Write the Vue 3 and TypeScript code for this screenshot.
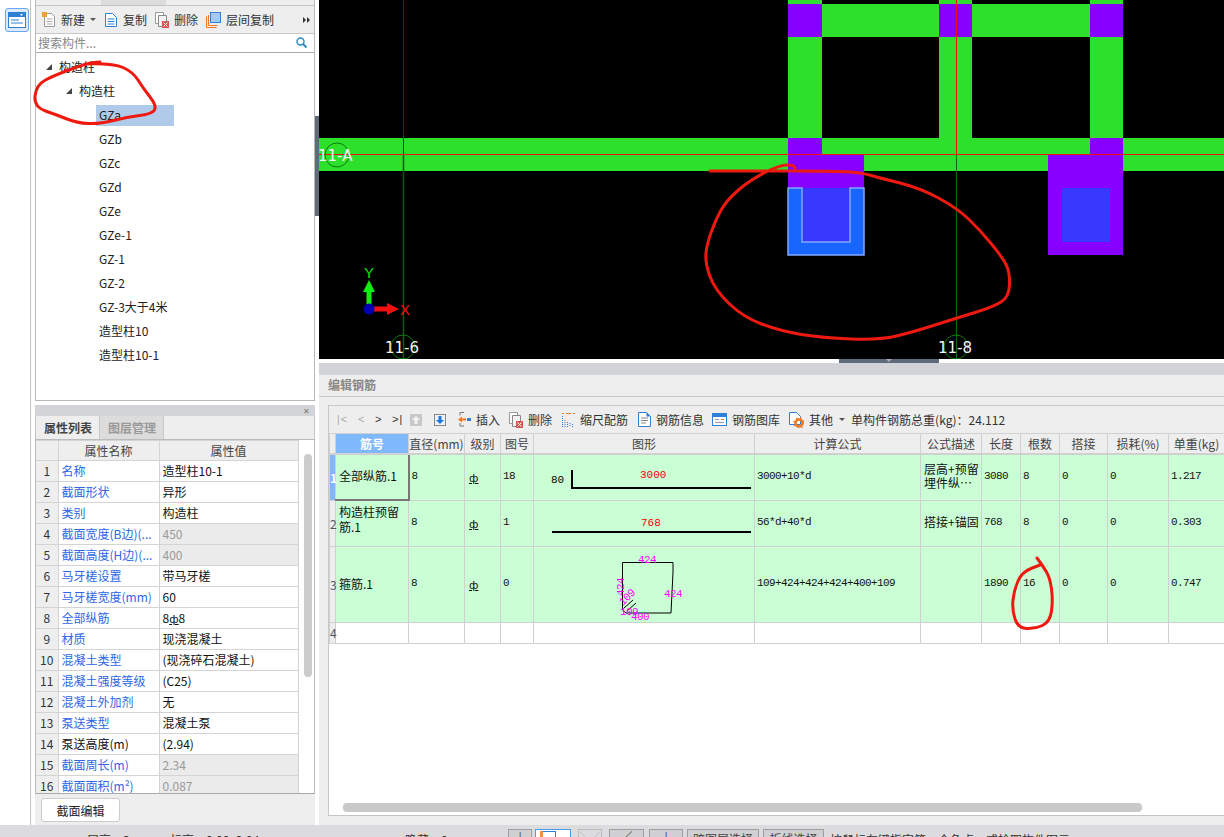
<template>
  <div class="app">
    <div class="main">
      <div class="strip">
        <div class="strip-btn">
          <svg width="18" height="16" viewBox="0 0 18 16">
            <rect x="0.5" y="0.5" width="17" height="15" fill="#fff" stroke="#2f7fd6" />
            <rect x="1" y="1" width="16" height="4" fill="#2f7fd6" />
            <path d="M3 8h8M3 11h12" stroke="#2f7fd6" />
            <path d="M12 2h3l-1.5 2z" fill="#fff" />
          </svg>
        </div>
      </div>

      <div class="left">
        <div class="tree-panel">
          <div class="tree-tabs"><span class="tree-tab"></span></div>
          <div class="tree-tools">
            <span class="tool">
              <svg width="14" height="16" viewBox="0 0 14 16"><path d="M2.5 1.5h7l3 3v10h-10z" fill="#fff" stroke="#999" /><path d="M4.500 7h6M4.500 9.500h6M4.500 12h6" stroke="#aaa" /><rect x="0" y="0" width="5" height="5" fill="#f0a030" /></svg>
              新建<i class="caret"></i>
            </span>
            <span class="tool">
              <svg width="14" height="16" viewBox="0 0 14 16"><path d="M1.500 1.500h7l4 4v9h-11z" fill="#fff" stroke="#2f7fd6" /><path d="M3.500 7h7M3.500 9.500h7M3.500 12h7" stroke="#2f7fd6" /></svg>
              复制
            </span>
            <span class="tool">
              <svg width="14" height="16" viewBox="0 0 14 16"><path d="M0.500 0.500h8v11h-8z" fill="#fff" stroke="#999" /><path d="M3.500 3.500h8v11h-8z" fill="#f4f4f4" stroke="#888" /><rect x="7" y="9" width="7" height="7" fill="#e05050" /><path d="M8.500 10.500l4 4m0-4l-4 4" stroke="#fff" /></svg>
              删除
            </span>
            <span class="tool">
              <svg width="15" height="16" viewBox="0 0 15 16"><path d="M0.500 4.500v11h10" fill="none" stroke="#f07820" /><path d="M2.500 3v10.500h9" fill="none" stroke="#f07820" /><rect x="4.500" y="0.500" width="10" height="10" fill="#a8c8f0" stroke="#2f7fd6" /></svg>
              层间复制
            </span>
            <span class="more"><i></i><i></i></span>
          </div>
          <div class="tree-search">
            <span>搜索构件...</span>
            <svg width="11" height="11" viewBox="0 0 11 11"><circle cx="4.500" cy="4.500" r="3.500" fill="none" stroke="#2a8fc8" stroke-width="1.500" /><path d="M7 7l3.500 3.500" stroke="#2a8fc8" stroke-width="2" /></svg>
          </div>
          <div class="tree-body">
            <div class="tree-row lv0"><i class="tri"></i>构造柱</div>
            <div class="tree-row lv1"><i class="tri"></i>构造柱</div>
            <div
              v-for="(name, i) in treeItems"
              :key="name"
              class="tree-row lv2"
            >
              <span class="leaf" :class="{ selected: i === 0 }">{{ name }}</span>
            </div>
          </div>
        </div>

        <div class="props-panel">
          <div class="props-title"><span class="close">✕</span></div>
          <div class="props-tabs">
            <span class="ptab active">属性列表</span>
            <span class="ptab">图层管理</span>
          </div>
          <div class="props-wrap">
            <table class="props">
              <colgroup><col style="width: 22px" /><col style="width: 101px" /><col style="width: 139px" /></colgroup>
              <thead>
                <tr><th></th><th>属性名称</th><th>属性值</th></tr>
              </thead>
              <tbody>
                <tr v-for="(p, i) in props" :key="i">
                  <td class="idx">{{ i + 1 }}</td>
                  <td class="pname" :class="{ plain: p.plain }">{{ p.name }}</td>
                  <td class="pval" :class="{ off: p.off }">
                    <template v-if="p.bar">8<span class="grade">ф</span>8</template>
                    <template v-else>{{ p.value }}</template>
                  </td>
                </tr>
              </tbody>
            </table>
            <div class="props-scroll"><div class="props-thumb"></div></div>
          </div>
          <div class="props-foot"><button class="edit-btn">截面编辑</button></div>
        </div>
      </div>

      <div class="sash"><div class="sash-handle"></div></div>

      <div class="right">
        <svg class="canvas" width="905" height="359" viewBox="319 0 905 359">
          <rect x="319" y="0" width="905" height="359" fill="#000" />
          <!-- 梁 -->
          <g fill="#2ce02c">
            <rect x="788" y="0" width="34" height="138" />
            <rect x="939" y="0" width="33" height="138" />
            <rect x="1090" y="0" width="33" height="138" />
            <rect x="788" y="4" width="335" height="33" />
            <rect x="319" y="138" width="905" height="33" />
          </g>
          <g fill="#8800ff">
            <rect x="788" y="4" width="34" height="33" />
            <rect x="939" y="4" width="33" height="33" />
            <rect x="1090" y="4" width="33" height="33" />
            <rect x="788" y="138" width="34" height="17" />
            <rect x="788" y="155" width="76" height="33" />
            <rect x="1090" y="138" width="33" height="17" />
            <rect x="1048" y="155" width="75" height="100" />
          </g>
          <rect x="1062" y="188" width="48" height="54" fill="#3838ff" />
          <!-- 选中的构造柱 -->
          <rect x="802" y="188" width="48" height="54" fill="#3838ff" />
          <path d="M788 188h14v54h48v-54h14v67h-76z" fill="#1966ff" stroke="#80a8ff" stroke-width="1.500" />
          <!-- 轴线 -->
          <path d="M403.500 0v155" stroke="#8a0000" />
          <path d="M403.500 155v205" stroke="#0c5a0c" stroke-width="1.500" />
          <path d="M956.500 0v155" stroke="#f01010" />
          <path d="M956.500 155v205" stroke="#0c6a0c" />
          <path d="M319 154.500h905" stroke="#f01010" />
          <g fill="none" stroke="#0c7a0c">
            <circle cx="337" cy="155" r="12" />
            <circle cx="403" cy="347" r="12" />
            <circle cx="956" cy="347" r="12" />
          </g>
          <g class="axis-label" fill="#f4f4f4">
            <text x="318" y="161">11-A</text>
            <text x="385" y="353">11-6</text>
            <text x="938" y="353">11-8</text>
          </g>
          <!-- 坐标系 -->
          <rect x="366.500" y="290" width="5" height="19" fill="#10f010" />
          <path d="M369 280l6 12h-12z" fill="#10f010" />
          <rect x="369" y="306.500" width="20" height="5" fill="#f01010" />
          <path d="M387 303l12 6-12 6z" fill="#f01010" />
          <circle cx="369" cy="309" r="5.500" fill="#0000b0" />
          <text class="xy" x="364" y="278" fill="#10e010">Y</text>
          <text class="xy" x="400" y="315" fill="#f01010">X</text>
        </svg>

        <div class="split"><div class="split-handle"><i></i></div></div>
        <div class="gap-bar"></div>

        <div class="rebar-panel">
          <div class="rebar-title">编辑钢筋</div>
          <div class="rebar-box">
            <div class="rebar-tools">
              <span class="nav"><span class="nav-off">|&lt;</span><span class="nav-off">&lt;</span><span>&gt;</span><span>&gt;|</span></span>
              <svg class="updown" width="12" height="12" viewBox="0 0 12 12"><rect width="12" height="12" fill="#c8c8c8" /><path d="M6 2l4 4H7.500v4h-3V6H2z" fill="#f4f4f4" /></svg>
              <svg class="updown second" width="12" height="12" viewBox="0 0 12 12"><rect width="12" height="12" fill="#888" /><rect x="1" y="1" width="10" height="10" fill="#e8f0fa" /><path d="M6 10L2 6h2.500V2h3v4H10z" fill="#1e78d8" /></svg>
              <span class="rtool ins">
                <svg width="13" height="15" viewBox="0 0 13 15"><path d="M6 .500H2v3M2 11v3h4" fill="none" stroke="#777" /><path d="M0 7.500l4-3v2h4v2H4v2z" fill="#f07820" /><rect x="9" y="6" width="4" height="3" fill="#2f7fd6" /></svg>
                插入
              </span>
              <span class="rtool">
                <svg width="14" height="16" viewBox="0 0 14 16"><path d="M0.500 0.500h8v11h-8z" fill="#fff" stroke="#999" /><path d="M3.500 3.500h8v11h-8z" fill="#f4f4f4" stroke="#888" /><rect x="7" y="9" width="7" height="7" fill="#e05050" /><path d="M8.500 10.500l4 4m0-4l-4 4" stroke="#fff" /></svg>
                删除
              </span>
              <span class="rtool t3">
                <svg width="13" height="15" viewBox="0 0 13 15"><path d="M0 1.500h2M11 1.500h2M4 1.500h5" stroke="#f07820" /><path d="M0.500 4v11M3 8v7M5.500 10v5M8 11v4M10.500 12v3" stroke="#2f7fd6" stroke-dasharray="1 1" /></svg>
                缩尺配筋
              </span>
              <span class="rtool t3">
                <svg width="13" height="15" viewBox="0 0 13 15"><path d="M.500 .500h8l4 4v10H.500z" fill="#fff" stroke="#2f7fd6" /><path d="M8.500 .500v4h4z" fill="#2f7fd6" /><path d="M3 6h7M3 8.500h7M3 11h5" stroke="#888" /></svg>
                钢筋信息
              </span>
              <span class="rtool t5">
                <svg width="15" height="13" viewBox="0 0 15 13"><rect x=".5" y=".5" width="14" height="12" fill="#fff" stroke="#2f7fd6" /><rect x="1" y="1" width="13" height="3" fill="#2f7fd6" /><path d="M3 6.500h4M3 9.500h9" stroke="#999" /><path d="M9 6.500h3" stroke="#f07820" /></svg>
                钢筋图库
              </span>
              <span class="rtool">
                <svg width="15" height="16" viewBox="0 0 15 16"><path d="M.500 .500h7l4 4v8H.500z" fill="#fff" stroke="#2f7fd6" /><circle cx="10" cy="11" r="3.500" fill="none" stroke="#f07820" stroke-width="2.500" /><circle cx="10" cy="11" r="5" fill="none" stroke="#f07820" stroke-dasharray="1.500 2.500" stroke-width="1.500" /></svg>
                其他<i class="caret"></i>
              </span>
              <span class="total">单构件钢筋总重(kg)：24.112</span>
            </div>

            <table class="rebar">
              <colgroup>
                <col v-for="w in colWidths" :key="w.k" :style="{ width: w.v + 'px' }" />
              </colgroup>
              <thead>
                <tr class="head">
                  <th class="rh"></th>
                  <th v-for="(h, i) in heads" :key="h" :class="{ cur: i === 0 }">{{ h }}</th>
                </tr>
              </thead>
              <tbody>
                <tr class="r1">
                  <td class="rh cur-rh">1</td>
                  <td class="jn cur-cell">全部纵筋.1</td>
                  <td class="m">8</td>
                  <td class="gr"><span class="grade">ф</span></td>
                  <td class="m">18</td>
                  <td class="shape">
                    <svg width="220" height="45" viewBox="534 455 220 45">
                      <path d="M572 470v18h179" fill="none" stroke="#000" stroke-width="2" />
                      <text class="dim" x="551" y="483" fill="#000">80</text>
                      <text class="dim" x="640" y="478" fill="#f00000">3000</text>
                    </svg>
                  </td>
                  <td class="m">3000+10*d</td>
                  <td class="desc two">层高+预留<br />埋件纵⋯</td>
                  <td class="m">3080</td>
                  <td class="m">8</td>
                  <td class="m">0</td>
                  <td class="m">0</td>
                  <td class="m">1.217</td>
                </tr>
                <tr class="r2">
                  <td class="rh">2</td>
                  <td class="jn two">构造柱预留<br />筋.1</td>
                  <td class="m">8</td>
                  <td class="gr"><span class="grade">ф</span></td>
                  <td class="m">1</td>
                  <td class="shape">
                    <svg width="220" height="45" viewBox="534 501 220 45">
                      <path d="M552 532h199" fill="none" stroke="#000" stroke-width="2" />
                      <text class="dim" x="641" y="526" fill="#f00000">768</text>
                    </svg>
                  </td>
                  <td class="m">56*d+40*d</td>
                  <td class="desc">搭接+锚固</td>
                  <td class="m">768</td>
                  <td class="m">8</td>
                  <td class="m">0</td>
                  <td class="m">0</td>
                  <td class="m">0.303</td>
                </tr>
                <tr class="r3">
                  <td class="rh">3</td>
                  <td class="jn">箍筋.1</td>
                  <td class="m">8</td>
                  <td class="gr"><span class="grade">ф</span></td>
                  <td class="m">0</td>
                  <td class="shape">
                    <svg width="220" height="75" viewBox="534 547 220 75">
                      <path d="M622.500 610V562.500H673V572L671 613H626L622.500 610" fill="none" stroke="#000" />
                      <path d="M624 608l9-8M627 611l9-8" stroke="#000" />
                      <g class="mag" fill="#ff00ff">
                        <text x="638" y="563">424</text>
                        <text x="664" y="597">424</text>
                        <text transform="translate(624 596) rotate(-90)">424</text>
                        <text x="631" y="620">400</text>
                        <text x="620" y="615">109</text>
                        <text transform="translate(623 606) rotate(-45)">109</text>
                      </g>
                    </svg>
                  </td>
                  <td class="m">109+424+424+424+400+109</td>
                  <td></td>
                  <td class="m">1890</td>
                  <td class="m">16</td>
                  <td class="m">0</td>
                  <td class="m">0</td>
                  <td class="m">0.747</td>
                </tr>
                <tr class="r4">
                  <td class="rh">4</td>
                  <td v-for="n in 12" :key="n"></td>
                </tr>
              </tbody>
            </table>
            <div class="h-scroll"><div class="h-thumb"></div></div>
          </div>
        </div>
      </div>
    </div>

    <div class="status">
      <span class="st st1">层高：3</span>
      <span class="st st2">标高：0.00~2.94</span>
      <span class="st st3">隐藏：0</span>
      <span class="sbtn b1">|</span>
      <span class="sbtn b2"><i class="sq"></i></span>
      <span class="sbtn b3">╲╱</span>
      <span class="sbtn b4">∕</span>
      <span class="sbtn b5">|</span>
      <span class="sbtn b6">跨图层选择</span>
      <span class="sbtn b7">折线选择</span>
      <span class="hint">按鼠标左键指定第一个角点，或拾取构件图元</span>
    </div>

    <!-- 手绘批注 -->
    <svg class="marks" width="1224" height="837" viewBox="0 0 1224 837">
      <path v-for="(m, i) in marks" :key="i" :d="m" fill="none" stroke="#ee1a10" stroke-width="3" stroke-linecap="round" stroke-linejoin="round" />
    </svg>
  </div>
</template>

<script setup lang="ts">
interface Prop {
  name: string;
  value?: string;
  off?: boolean;
  plain?: boolean;
  bar?: boolean;
}

const treeItems = [
  'GZa', 'GZb', 'GZc', 'GZd', 'GZe', 'GZe-1', 'GZ-1', 'GZ-2', 'GZ-3大于4米', '造型柱10', '造型柱10-1',
];

const props: Prop[] = [
  { name: '名称', value: '造型柱10-1' },
  { name: '截面形状', value: '异形' },
  { name: '类别', value: '构造柱' },
  { name: '截面宽度(B边)(...', value: '450', off: true },
  { name: '截面高度(H边)(...', value: '400', off: true },
  { name: '马牙槎设置', value: '带马牙槎' },
  { name: '马牙槎宽度(mm)', value: '60' },
  { name: '全部纵筋', bar: true },
  { name: '材质', value: '现浇混凝土' },
  { name: '混凝土类型', value: '(现浇碎石混凝土)' },
  { name: '混凝土强度等级', value: '(C25)' },
  { name: '混凝土外加剂', value: '无' },
  { name: '泵送类型', value: '混凝土泵' },
  { name: '泵送高度(m)', value: '(2.94)', plain: true },
  { name: '截面周长(m)', value: '2.34', off: true },
  { name: '截面面积(m²)', value: '0.087', off: true },
];

const heads = ['筋号', '直径(mm)', '级别', '图号', '图形', '计算公式', '公式描述', '长度', '根数', '搭接', '损耗(%)', '单重(kg)'];

const colWidths = [6, 73, 56, 36, 33, 221, 166, 61, 39, 39, 48, 61, 56].map((v, k) => ({ k, v }));

// 折点连成平滑曲线
const smooth = (pts: number[][]) => {
  let d = `M${pts[0][0]} ${pts[0][1]}`;
  for (let i = 1; i < pts.length - 1; i++) {
    const mx = (pts[i][0] + pts[i + 1][0]) / 2;
    const my = (pts[i][1] + pts[i + 1][1]) / 2;
    d += ` Q${pts[i][0]} ${pts[i][1]} ${mx} ${my}`;
  }
  const last = pts[pts.length - 1];
  return `${d} L${last[0]} ${last[1]}`;
};

const marks = [
  smooth([[85, 64], [113, 63], [133, 72], [143, 88], [157, 106], [152, 114], [127, 117], [100, 124], [77, 123], [57, 115], [34, 107], [36, 85], [55, 75], [88, 63], [100, 62]]),
  smooth([[710, 171], [760, 171], [837, 171], [863, 173], [880, 178], [920, 188], [957, 208], [980, 230], [1003, 258], [1010, 273], [1009, 297], [993, 307], [957, 318], [913, 332], [880, 340], [823, 338], [780, 331], [743, 317], [715, 290], [705, 263], [707, 243], [717, 217], [727, 200], [750, 180], [780, 165], [793, 165], [795, 168]]),
  smooth([[1037, 558], [1043, 566], [1050, 578], [1053, 600], [1050, 622], [1035, 629], [1018, 628], [1012, 610], [1014, 590], [1022, 572], [1040, 565]]),
];
</script>

<style>
html, body { margin: 0; background: #fff; overflow: hidden; }
</style>

<style scoped>
.app {
  position: relative;
  width: 1224px;
  height: 837px;
  overflow: hidden;
  display: flex;
  flex-direction: column;
  font-family: "Noto Sans CJK SC", "Liberation Sans", sans-serif;
  font-size: 12px;
  color: #333;
  background: #fff;
}
.main { height: 825px; display: flex; }

.strip {
  width: 25px;
  flex-shrink: 0;
  border-right: 1px solid #c4c4c4;
  padding: 8px 0 0 5px;
  margin-right: 4px;
}
.strip-btn {
  width: 22px;
  height: 22px;
  border: 1px solid #6aa8f0;
  border-radius: 3px;
  background: #dcebfb;
  display: flex;
  align-items: center;
  justify-content: center;
}

.left { width: 280px; flex-shrink: 0; display: flex; flex-direction: column; }
.tree-panel {
  height: 401px;
  box-sizing: border-box;
  border: 1px solid #b8b8b8;
  border-top: none;
  display: flex;
  flex-direction: column;
}
.tree-tabs { height: 5px; background: #eee; border-bottom: 1px solid #c4c4c4; padding-left: 65px; }
.tree-tab { display: block; width: 65px; height: 5px; background: #dcdcdc; }
.tree-tools {
  height: 27px;
  background: #eee;
  border-bottom: 1px solid #c8c8c8;
  display: flex;
  align-items: center;
  padding-left: 6px;
  gap: 8px;
}
.tool { display: flex; align-items: center; gap: 5px; }
.caret {
  display: inline-block;
  width: 0;
  height: 0;
  border: 3px solid transparent;
  border-top: 3px solid #555;
  margin: 3px 0 0 0;
}
.more { margin-left: auto; margin-right: 4px; display: flex; gap: 1px; }
.more i { width: 0; height: 0; border: 3px solid transparent; border-left: 3px solid #333; border-right: none; }
.tree-search {
  border-bottom: 1px solid #aaa;
  display: flex;
  align-items: center;
  justify-content: space-between;
  padding: 0 7px 2px 2px;
  box-sizing: border-box;
  height: 19px;
  color: #888;
}
.tree-body { flex: 1; padding-top: 2px; color: #222; }
.tree-row { height: 24px; line-height: 24px; display: flex; align-items: center; }
.lv0 { padding-left: 10px; }
.lv1 { padding-left: 30px; }
.lv2 { padding-left: 60px; }
.tri {
  width: 0;
  height: 0;
  border-style: solid;
  border-width: 0 0 6px 6px;
  border-color: transparent transparent #444 transparent;
  margin-right: 7px;
}
.leaf { display: block; min-width: 75px; height: 21px; line-height: 19px; padding-left: 3px; }
.leaf.selected { background: #b0cbea; }

.props-panel {
  margin-top: 4px;
  flex: 1;
  display: flex;
  flex-direction: column;
  background: #eee;
}
.props-title { height: 11px; background: #d3d4d8; display: flex; justify-content: flex-end; align-items: center; padding-right: 5px; }
.close { font-size: 8px; color: #777; }
.props-tabs { height: 23px; display: flex; background: #eee; border-left: 1px solid #c4c4c4; border-right: 1px solid #c4c4c4; box-sizing: border-box; }
.ptab { width: 64px; text-align: center; line-height: 23px; background: #dcdcdc; color: #999; font-weight: bold; box-shadow: inset -1px 0 #c8c8c8; }
.ptab.active { background: #eee; color: #444; }
.props-wrap {
  height: 355px;
  background: #fff;
  border: 1px solid #bbb;
  border-bottom-color: #aaa;
  box-sizing: border-box;
  display: flex;
  overflow: hidden;
}
.props {
  width: 262px;
  flex-shrink: 0;
  table-layout: fixed;
  border-collapse: collapse;
  align-self: flex-start;
}
.props th, .props td {
  height: 21px;
  padding: 0 0 1px;
  border: 1px solid #d4d4d4;
  border-left: none;
  box-sizing: border-box;
  white-space: nowrap;
  overflow: hidden;
}
.props th { background: #eee; font-weight: normal; color: #444; font-size: 12px; height: 20px; }
.idx { background: #eee; text-align: center; color: #333; }
.pname { color: #2e66e6; padding-left: 3px !important; }
.pname.plain { color: #111; }
.pval { color: #111; padding-left: 3px !important; }
.pval.off { background: #ebebeb; color: #999; }
.grade { text-decoration: underline; font-family: "DejaVu Sans", sans-serif; font-size: 11px; }
.props-scroll { flex: 1; padding: 14px 0 0 5px; }
.props-thumb { width: 8px; height: 223px; background: #cbcbcb; border-radius: 4px; }
.props-foot { flex: 1; padding: 4px 0 0 6px; }
.edit-btn {
  width: 79px;
  height: 24px;
  padding: 0;
  background: #fff;
  border: 1px solid #ccc;
  border-radius: 3px;
  font: inherit;
  color: #222;
}

.sash { width: 4px; flex-shrink: 0; padding-top: 116px; }
.sash-handle { height: 100px; background: #5f6b78; }

.right { flex: 1; min-width: 0; display: flex; flex-direction: column; }
.canvas { display: block; flex-shrink: 0; }
.axis-label { font-family: "DejaVu Sans", sans-serif; font-size: 15px; }
.xy { font-family: "Liberation Sans", sans-serif; font-size: 15px; }
.split { height: 4px; background: #fff; padding-left: 520px; }
.split-handle { width: 100px; height: 4px; background: #5f6b78; display: flex; justify-content: center; }
.split-handle i { width: 0; height: 0; border: 3px solid transparent; border-top-color: #aab; }
.gap-bar { height: 12px; background: #d2d3d8; }
.rebar-panel { flex: 1; min-height: 0; background: #eee; padding-left: 9px; display: flex; flex-direction: column; }
.rebar-title {
  height: 21px;
  line-height: 20px;
  margin-left: -9px;
  padding-left: 9px;
  border-bottom: 1px solid #c8c8c8;
  color: #888;
  font-weight: bold;
}
.rebar-box {
  margin-top: 8px;
  height: 411px;
  background: #fff;
  border: 1px solid #c8c8c8;
  border-right: none;
  border-bottom: 1px solid #c4c4c4;
  box-sizing: border-box;
  overflow: hidden;
  display: flex;
  flex-direction: column;
  position: relative;
}
.rebar-tools {
  height: 27px;
  flex-shrink: 0;
  background: #eee;
  display: flex;
  align-items: center;
  padding-left: 6px;
  white-space: nowrap;
  box-sizing: border-box;
}
.nav {
  display: grid;
  grid-template-columns: 23px 17px 17px 18px;
  width: 75px;
  font-family: "Liberation Mono", monospace;
  font-size: 11px;
  color: #333;
  letter-spacing: -1px;
}
.nav-off { color: #aaa; }
.updown.second { margin-left: 12px; }
.rtool { display: flex; align-items: center; gap: 5px; margin-left: 9px; }
.rtool.ins { margin-left: 12px; }
.rtool.t3 { margin-left: 10px; }
.rtool.t5 { margin-left: 8px; }
.total { margin-left: 6px; }
.rtool .caret { margin-left: 1px; }

.rebar {
  width: 895px;
  flex-shrink: 0;
  table-layout: fixed;
  border-collapse: collapse;
}
.rebar th, .rebar td {
  padding: 0 0 2px;
  border: 1px solid #d0d0d0;
  box-sizing: border-box;
  overflow: hidden;
  white-space: nowrap;
}
.rebar th { background: #eee; font-weight: normal; height: 20px; padding: 0; color: #444; border-bottom-width: 2px; }
.rebar th.cur { background: #7fb8fb; color: #fff; font-weight: bold; }
.r1 td { height: 46px; }
.r2 td { height: 46px; }
.r3 td { height: 76px; }
.r4 td { height: 21px; }
.r1 td, .r2 td, .r3 td { background: #caffd6; }
.rebar td.rh { background: #eee; text-align: center; color: #556; font-size: 12px; padding: 0; overflow: visible; }
.rebar td.cur-rh { background: #7fb8fb; color: #fff; font-weight: bold; }
.rebar td.shape { padding: 0; }
.jn { padding-left: 3px !important; color: #111; line-height: 15px; }
.jn.two { padding-bottom: 8px; }
.jn.cur-cell { border-right: 2px solid #777; border-bottom: 2px solid #777; }
.m { font-family: "Liberation Mono", monospace; font-size: 11px; letter-spacing: -.6px; padding-left: 2px !important; color: #111; }
.gr { padding-left: 4px !important; color: #111; }
.desc { padding-left: 3px !important; color: #111; line-height: 14px; }
.desc.two { padding-bottom: 3px; }
.shape svg { display: block; }
.dim { font-family: "Liberation Mono", monospace; font-size: 11px; }
.mag text { font-family: "Liberation Mono", monospace; font-size: 11px; letter-spacing: -.6px; }
.h-scroll { flex: 1; display: flex; align-items: flex-end; padding: 0 0 3px 14px; }
.h-thumb { width: 799px; height: 9px; background: #c9c9c9; border-radius: 4px; }

.status {
  height: 12px;
  background: #dcdcde;
  display: flex;
  overflow: hidden;
  white-space: nowrap;
  flex-shrink: 0;
  color: #333;
  line-height: 14px;
  position: relative;
}
.st { padding-top: 8px; }
.st1 { margin-left: 87px; width: 83px; }
.st2 { width: 235px; }
.st3 { width: 103px; }
.sbtn {
  margin-top: 4px;
  height: 14px;
  line-height: 14px;
  background: #d0d0d2;
  border: 1px solid #9e9e9e;
  box-sizing: border-box;
  text-align: center;
  flex-shrink: 0;
  color: #444;
}
.b1 { width: 24px; }
.b2 { width: 36px; margin-left: 3px; background: #fff; border-color: #4a9cf0; position: relative; }
.sq { position: absolute; left: 5px; top: 1px; width: 13px; height: 9px; border: 1px solid #2f7fd6; border-bottom: none; }
.sq::before { content: ""; position: absolute; left: -2px; top: -1px; width: 3px; height: 7px; background: #f09040; }
.b3 { width: 24px; margin-left: 7px; background: #dcdcde; border-color: #bbb; color: #aaa; font-size: 10px; }
.b4 { width: 35px; margin-left: 7px; }
.b5 { width: 34px; margin-left: 5px; }
.b6 { width: 72px; margin-left: 4px; }
.b7 { width: 61px; margin-left: 4px; }
.sbtn.b6, .sbtn.b7 { padding-top: 2px; }
.hint { margin-left: 6px; padding-top: 8px; }

.marks { position: absolute; left: 0; top: 0; pointer-events: none; }
</style>
